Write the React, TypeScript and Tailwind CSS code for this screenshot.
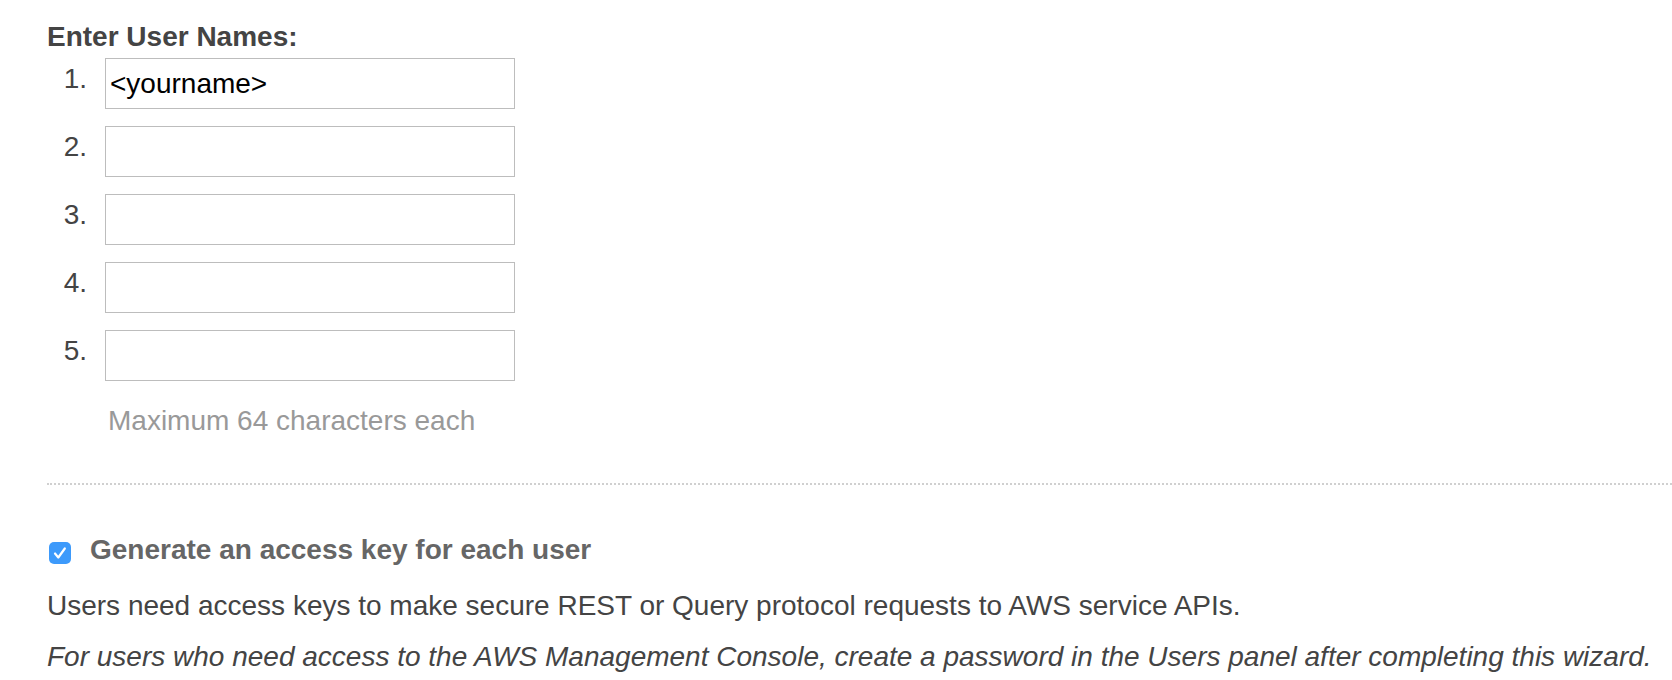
import { useState } from "react";

const rows = [1, 2, 3, 4, 5];

function CheckIcon() {
  return (
    <svg viewBox="0 0 22 22" className="h-[22px] w-[22px]">
      <path
        d="M6 11.5 L9.3 15.5 L15.8 6.5"
        fill="none"
        stroke="#fff"
        strokeWidth="2.2"
        strokeLinecap="round"
        strokeLinejoin="round"
      />
    </svg>
  );
}

export default function App() {
  const [names, setNames] = useState<string[]>(["<yourname>", "", "", "", ""]);
  const [genKey, setGenKey] = useState(true);

  return (
    <div
      className="min-h-screen bg-white pl-[47px] pt-[21px] text-[#444]"
      style={{ fontFamily: '"Liberation Sans", Arial, Helvetica, sans-serif' }}
    >
      <h2 className="text-[28px] font-bold leading-[32px] text-[#444]">
        Enter User Names:
      </h2>

      <ol className="mt-[5px] flex flex-col gap-[17px]">
        {rows.map((n, i) => (
          <li key={n} className="flex items-start">
            <span className="w-[40px] pt-[5px] text-right text-[28px] leading-[32px] text-[#444]">
              {n}.
            </span>
            <input
              value={names[i]}
              onChange={(e) => {
                const next = [...names];
                next[i] = e.target.value;
                setNames(next);
              }}
              className="ml-[18px] h-[51px] w-[410px] border border-[#bdbdbd] bg-white px-[4px] text-[28px] text-black outline-none"
            />
          </li>
        ))}
      </ol>

      <p className="mt-[24px] pl-[61px] text-[28px] leading-[32px] text-[#999]">
        Maximum 64 characters each
      </p>

      <div className="mt-[46px] border-t-2 border-dotted border-[#d0d0d0]" />

      <label className="mt-[49px] flex items-start">
        <button
          type="button"
          onClick={() => setGenKey(!genKey)}
          className={`ml-[2px] mt-[8px] flex h-[22px] w-[22px] items-center justify-center rounded-[5px] ${
            genKey ? "bg-[#3d9afb]" : "border border-[#aaa] bg-white"
          }`}
        >
          {genKey && <CheckIcon />}
        </button>
        <span className="ml-[19px] text-[28px] font-bold leading-[32px] text-[#666]">
          Generate an access key for each user
        </span>
      </label>

      <p className="mt-[24px] text-[28px] leading-[32px] text-[#444]">
        Users need access keys to make secure REST or Query protocol requests to AWS service APIs.
      </p>
      <p className="mt-[19px] text-[28px] italic leading-[32px] text-[#444]">
        For users who need access to the AWS Management Console, create a password in the Users panel after completing this wizard.
      </p>
    </div>
  );
}
